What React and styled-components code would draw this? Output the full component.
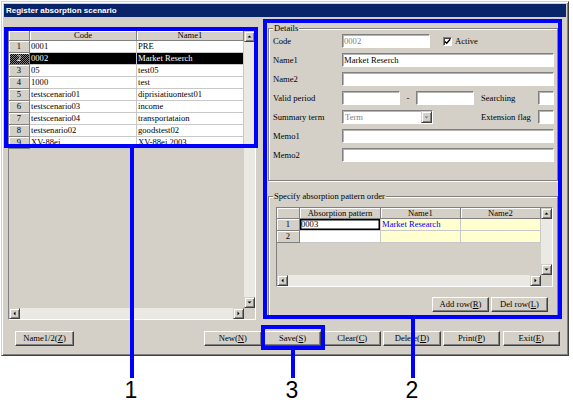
import React from "react";
import styled, { createGlobalStyle } from "styled-components";

const FACE = "#d4d0c8";
const SERIF = `"Liberation Serif", "Times New Roman", serif`;
const SANS = `"Liberation Sans", Arial, sans-serif`;
const MARK = "#0000ff";
const PALE = "#ffffd0";

const GlobalStyle = createGlobalStyle`
  html, body { margin: 0; padding: 0; background: #fff; }
  #root { width: 573px; height: 408px; }
`;

const scenarios = [
  ["0001", "PRE"],
  ["0002", "Market Reserch"],
  ["05", "test05"],
  ["1000", "test"],
  ["testscenario01", "diprisiatiuontest01"],
  ["testscenario03", "income"],
  ["testscenario04", "transportataion"],
  ["testsenario02", "goodstest02"],
  ["XV-88ei", "XV-88ei 2003"],
];

const selectedIndex = 1;

const Page = styled.div`
  position: relative;
  width: 573px;
  height: 408px;
  box-sizing: border-box;
  padding: 1px 0 0 1px;
  overflow: hidden;
`;

const Window = styled.div`
  width: 568px;
  height: 355px;
  box-sizing: border-box;
  display: flex;
  flex-direction: column;
  padding: 2px;
  background: ${FACE};
  border: 1px solid;
  border-color: ${FACE} #404040 #404040 ${FACE};
  box-shadow: inset 1px 1px #fff, inset -1px -1px #808080;
  font: 8.6px ${SERIF};
  color: #000;
`;

const TitleBar = styled.div`
  flex: none;
  height: 13px;
  display: flex;
  align-items: center;
  padding-left: 2px;
  background: #0a246a;
  color: #fff;
  font: bold 8px ${SANS};
`;

const Main = styled.div`
  flex: none;
  height: 303px;
  display: flex;
  align-items: flex-start;
`;

// grid parts
const GridFrame = styled.div`
  flex: none;
  box-sizing: border-box;
  width: ${(p) => p.$w}px;
  height: ${(p) => p.$h}px;
  margin: ${(p) => p.$m || 0};
  display: grid;
  grid-template-columns: 1fr 11px;
  grid-template-rows: 1fr 11px;
  border: 1px solid;
  border-color: #808080 #fff #fff #808080;
  background: ${FACE};
`;

const GridBody = styled.div`
  overflow: hidden;
  min-width: 0;
`;

const GridRow = styled.div`
  display: grid;
  grid-template-columns: ${(p) => p.$cols};
  height: ${(p) => p.$h}px;
  line-height: ${(p) => p.$h - 1}px;
`;

const HeadCell = styled.div`
  box-sizing: border-box;
  background: ${(p) =>
    p.$selected
      ? "repeating-conic-gradient(#000 0 25%, #808080 0 50%) 0 0 / 2px 2px"
      : FACE};
  color: ${(p) => (p.$selected ? "#fff" : "#000")};
  border-right: 1px solid #808080;
  border-bottom: 1px solid #808080;
  box-shadow: inset 1px 1px #fff;
  text-align: center;
  white-space: nowrap;
  overflow: hidden;
`;

const Cell = styled.div`
  box-sizing: border-box;
  background: ${(p) => p.$bg || "#fff"};
  color: ${(p) => p.$fg || "#000"};
  border-right: 1px solid #c8c8c8;
  border-bottom: 1px solid #c8c8c8;
  padding-left: 1px;
  white-space: nowrap;
  overflow: hidden;
  box-shadow: ${(p) => (p.$focus ? "inset 0 0 0 1.5px #000" : "none")};
`;

const ScrollTrack = styled.div`
  display: flex;
  flex-direction: ${(p) => (p.$vertical ? "column" : "row")};
  justify-content: space-between;
  background: #ebe9e4;
`;

const Corner = styled.div`
  background: ${FACE};
`;

const ArrowBtn = styled.div`
  flex: none;
  box-sizing: border-box;
  width: 11px;
  height: 11px;
  display: flex;
  align-items: center;
  justify-content: center;
  background: ${FACE};
  border: 1px solid;
  border-color: ${FACE} #404040 #404040 ${FACE};
  box-shadow: inset 1px 1px #fff, inset -1px -1px #808080;
`;

const arrowPoints = {
  up: "1.5,4.5 5.5,4.5 3.5,2.5",
  down: "1.5,2.5 5.5,2.5 3.5,4.5",
  left: "4.5,1.5 4.5,5.5 2.5,3.5",
  right: "2.5,1.5 2.5,5.5 4.5,3.5",
};

function Arrow({ dir, color = "#000" }) {
  return (
    <svg width="7" height="7" viewBox="0 0 7 7">
      <polygon points={arrowPoints[dir]} fill={color} />
    </svg>
  );
}

function DataGrid({ width, height, margin, cols, headH, rowH, headers, rows }) {
  return (
    <GridFrame $w={width} $h={height} $m={margin}>
      <GridBody>
        <GridRow $cols={cols} $h={headH}>
          <HeadCell />
          {headers.map((h) => (
            <HeadCell key={h}>{h}</HeadCell>
          ))}
        </GridRow>
        {rows.map((row, i) => (
          <GridRow key={i} $cols={cols} $h={rowH}>
            <HeadCell $selected={row.selected}>{i + 1}</HeadCell>
            {row.cells.map((c, j) => (
              <Cell key={j} $bg={c.bg} $fg={c.fg} $focus={c.focus}>
                {c.text}
              </Cell>
            ))}
          </GridRow>
        ))}
      </GridBody>
      <ScrollTrack $vertical>
        <ArrowBtn>
          <Arrow dir="up" />
        </ArrowBtn>
        <ArrowBtn>
          <Arrow dir="down" />
        </ArrowBtn>
      </ScrollTrack>
      <ScrollTrack>
        <ArrowBtn>
          <Arrow dir="left" />
        </ArrowBtn>
        <ArrowBtn>
          <Arrow dir="right" />
        </ArrowBtn>
      </ScrollTrack>
      <Corner />
    </GridFrame>
  );
}

// details form
const RightPane = styled.div`
  flex: none;
  width: 290px;
  margin: 11px 0 0 12px;
`;

const Group = styled.div`
  margin-top: ${(p) => p.$mt || 0}px;
  padding: ${(p) => p.$pad};
  border: 1px solid #808080;
  box-shadow: inset 1px 1px #fff, 1px 1px #fff;
`;

const GroupTitle = styled.div`
  display: table;
  height: 10px;
  line-height: 10px;
  margin: -6px 0 0 ${(p) => p.$ml || 0}px;
  padding: 0 1px;
  background: ${FACE};
`;

const Fields = styled.div`
  display: flex;
  flex-direction: column;
  gap: 5px;
  margin-top: 1px;
`;

const Field = styled.div`
  display: flex;
  align-items: center;
  height: 14px;
  white-space: nowrap;
`;

const FieldLabel = styled.span`
  flex: none;
  width: 69px;
`;

const SideLabel = styled.span`
  margin-left: ${(p) => p.$ml}px;
`;

const TextBox = styled.input.attrs({ readOnly: true })`
  flex: none;
  box-sizing: border-box;
  width: ${(p) => p.$w}px;
  height: 14px;
  margin: 0 0 0 ${(p) => (p.$auto ? "auto" : "0")};
  padding: 0 1px;
  background: #fff;
  border: 1px solid;
  border-color: #808080 #fff #fff #808080;
  box-shadow: inset 1px 1px #b4b4b4;
  font: 8.6px ${SERIF};
  color: ${(p) => (p.$muted ? "#808080" : "#000")};
  outline: none;
`;

const Dash = styled.span`
  flex: none;
  width: 16px;
  text-align: center;
`;

const CheckBox = styled.span`
  flex: none;
  box-sizing: border-box;
  width: 9px;
  height: 9px;
  margin-left: 13px;
  display: flex;
  align-items: center;
  justify-content: center;
  background: #fff;
  border: 1px solid;
  border-color: #808080 #fff #fff #808080;
  box-shadow: inset 1px 1px #404040;
`;

const CheckText = styled.span`
  margin-left: 3px;
`;

const SelectBox = styled.div`
  flex: none;
  box-sizing: border-box;
  width: ${(p) => p.$w}px;
  height: 14px;
  display: flex;
  background: #fff;
  border: 1px solid;
  border-color: #808080 #fff #fff #808080;
  box-shadow: inset 1px 1px #b4b4b4;
  color: #808080;
  line-height: 12px;
`;

const SelectValue = styled.span`
  flex: 1;
  padding-left: 2px;
`;

const DropBtn = styled(ArrowBtn)`
  height: 12px;
`;

const ButtonRow = styled.div`
  display: flex;
  justify-content: ${(p) => p.$justify || "flex-end"};
  gap: ${(p) => p.$gap || 0}px;
  margin-top: ${(p) => p.$mt || 0}px;
  padding-right: ${(p) => p.$pr || 0}px;
`;

const Button = styled.button`
  flex: none;
  box-sizing: border-box;
  width: ${(p) => p.$w}px;
  height: 15px;
  margin: 0;
  padding: 0;
  background: ${FACE};
  border: 1px solid;
  border-color: #fff #404040 #404040 #fff;
  box-shadow: inset -1px -1px #808080;
  font: 8.6px ${SERIF};
  line-height: 13px;
  color: #000;
  white-space: nowrap;
`;

const Footer = styled.div`
  flex: none;
  height: 15px;
  margin-top: 11px;
  padding: 0 6px 0 11px;
  display: flex;
  justify-content: space-between;
`;

// annotation overlay
const MarkBox = styled.div`
  position: absolute;
  box-sizing: border-box;
  left: ${(p) => p.$x}px;
  top: ${(p) => p.$y}px;
  width: ${(p) => p.$w}px;
  height: ${(p) => p.$h}px;
  border: 4px solid ${MARK};
`;

const MarkLine = styled.div`
  position: absolute;
  left: ${(p) => p.$x}px;
  top: ${(p) => p.$y}px;
  width: 4px;
  height: ${(p) => p.$h}px;
  background: ${MARK};
`;

const MarkNumber = styled.div`
  position: absolute;
  left: ${(p) => p.$cx - 10}px;
  top: 379px;
  width: 20px;
  text-align: center;
  font: 23px/23px ${SANS};
  color: #000;
`;

function Key({ label, k }) {
  const i = label.indexOf("(" + k + ")");
  return (
    <>
      {label.slice(0, i)}(<u>{k}</u>)
    </>
  );
}

const footerButtons = [
  ["New", "N"],
  ["Save", "S"],
  ["Clear", "C"],
  ["Delete", "D"],
  ["Print", "P"],
  ["Exit", "E"],
];

export default function App() {
  const leftRows = scenarios.map(([code, name], i) => {
    const sel = i === selectedIndex;
    const style = sel ? { bg: "#000", fg: "#fff" } : {};
    return {
      selected: sel,
      cells: [
        { text: code, ...style },
        { text: name, ...style },
      ],
    };
  });

  const patternRows = [
    {
      cells: [
        { text: "0003", focus: true },
        { text: "Market Research", bg: PALE, fg: "#0000ff" },
        { text: "", bg: PALE },
      ],
    },
    {
      cells: [{ text: "" }, { text: "", bg: PALE }, { text: "", bg: PALE }],
    },
  ];

  return (
    <Page>
      <GlobalStyle />
      <Window>
        <TitleBar>Register absorption scenario</TitleBar>
        <Main>
          <DataGrid
            width={248}
            height={290}
            margin="13px 0 0 4px"
            cols="21px 107px 107px"
            headH={10}
            rowH={12}
            headers={["Code", "Name1"]}
            rows={leftRows}
          />
          <RightPane>
            <Group $pad="0 3px 18px 4px">
              <GroupTitle>Details</GroupTitle>
              <Fields>
                <Field>
                  <FieldLabel>Code</FieldLabel>
                  <TextBox $w={88} $muted value="0002" />
                  <CheckBox>
                    <svg width="7" height="7" viewBox="0 0 7 7">
                      <path d="M0.8 3.4 L2.7 5.3 L6.2 1.3" stroke="#000" strokeWidth="1.4" fill="none" />
                    </svg>
                  </CheckBox>
                  <CheckText>Active</CheckText>
                </Field>
                <Field>
                  <FieldLabel>Name1</FieldLabel>
                  <TextBox $w={212} value="Market Reserch" />
                </Field>
                <Field>
                  <FieldLabel>Name2</FieldLabel>
                  <TextBox $w={212} value="" />
                </Field>
                <Field>
                  <FieldLabel>Valid period</FieldLabel>
                  <TextBox $w={58} value="" />
                  <Dash>-</Dash>
                  <TextBox $w={58} value="" />
                  <SideLabel $ml={7}>Searching</SideLabel>
                  <TextBox $w={16} $auto value="" />
                </Field>
                <Field>
                  <FieldLabel>Summary term</FieldLabel>
                  <SelectBox $w={91}>
                    <SelectValue>Term</SelectValue>
                    <DropBtn>
                      <Arrow dir="down" color="#808080" />
                    </DropBtn>
                  </SelectBox>
                  <SideLabel $ml={48}>Extension flag</SideLabel>
                  <TextBox $w={16} $auto value="" />
                </Field>
                <Field>
                  <FieldLabel>Memo1</FieldLabel>
                  <TextBox $w={212} value="" />
                </Field>
                <Field>
                  <FieldLabel>Memo2</FieldLabel>
                  <TextBox $w={212} value="" />
                </Field>
              </Fields>
            </Group>
            <Group $mt={15} $pad="0 4px 3px 7px">
              <GroupTitle $ml={-3}>Specify absorption pattern order</GroupTitle>
              <DataGrid
                width={277}
                height={80}
                margin="6px 0 0 0"
                cols="23px 81px 80px 80px"
                headH={11}
                rowH={12}
                headers={["Absorption pattern", "Name1", "Name2"]}
                rows={patternRows}
              />
              <ButtonRow $mt={10} $gap={2} $pr={5}>
                <Button $w={57}>
                  <Key label="Add row(R)" k="R" />
                </Button>
                <Button $w={57}>
                  <Key label="Del row(L)" k="L" />
                </Button>
              </ButtonRow>
            </Group>
          </RightPane>
        </Main>
        <Footer>
          <Button $w={59}>
            <Key label="Name1/2(Z)" k="Z" />
          </Button>
          <ButtonRow $gap={2.2}>
            {footerButtons.map(([name, k]) => (
              <Button key={k} $w={57.5}>
                <Key label={`${name}(${k})`} k={k} />
              </Button>
            ))}
          </ButtonRow>
        </Footer>
      </Window>

      <MarkBox $x={4} $y={27} $w={254} $h={121} />
      <MarkBox $x={263} $y={19} $w={299} $h={300} />
      <MarkBox $x={261} $y={325} $w={64} $h={25} />
      <MarkLine $x={130} $y={147} $h={231} />
      <MarkLine $x={291} $y={349} $h={29} />
      <MarkLine $x={411} $y={318} $h={60} />
      <MarkNumber $cx={131}>1</MarkNumber>
      <MarkNumber $cx={292}>3</MarkNumber>
      <MarkNumber $cx={412}>2</MarkNumber>
    </Page>
  );
}
